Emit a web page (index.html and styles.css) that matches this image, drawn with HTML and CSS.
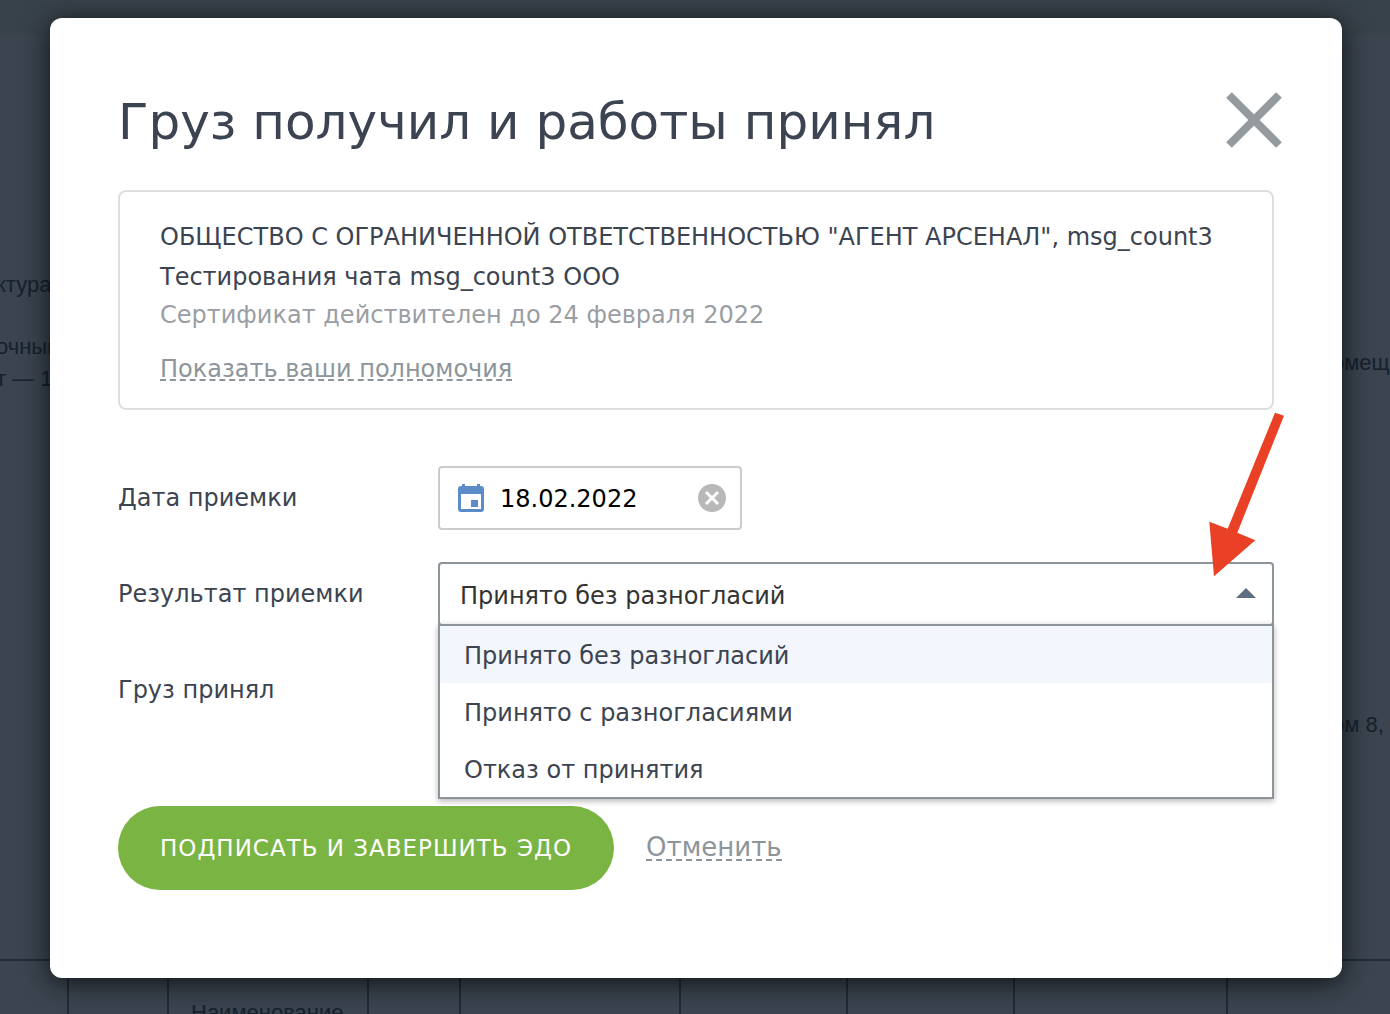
FILE: index.html
```html
<!DOCTYPE html>
<html lang="ru">
<head>
<meta charset="utf-8">
<meta name="viewport" content="width=device-width, initial-scale=1">
<title>Груз получил и работы принял</title>
<link rel="stylesheet" href="styles.css">
</head>
<body>
<div class="document" aria-hidden="true">
  <div class="document-bar"></div>
  <div class="document-text">
    <div class="document-left">
      <p>ктура</p>
      <p>очный<br>т — 1</p>
    </div>
    <div class="document-right">
      <p>омещ</p>
      <p>ом 8,</p>
    </div>
  </div>
  <table class="document-table">
    <colgroup><col class="c-edge"><col class="c-code"><col class="c-name"><col class="c-unit"><col class="c-wide"><col class="c-mid"><col class="c-mid"><col class="c-sum"><col></colgroup>
    <tr><td></td><td></td><td>Наименование</td><td></td><td></td><td></td><td></td><td></td><td></td></tr>
  </table>
</div>

<main class="overlay">
  <section class="modal" role="dialog" aria-modal="true" aria-labelledby="title">
    <header class="modal-header">
      <h1 id="title">Груз получил и работы принял</h1>
      <button class="close" type="button" aria-label="Закрыть">
        <svg viewBox="0 0 56 56" width="56" height="56"><path d="M3 3 53 53M53 3 3 53" stroke="#949a9e" stroke-width="8" fill="none"/></svg>
      </button>
    </header>

    <div class="certificate">
      <p class="owner">ОБЩЕСТВО С ОГРАНИЧЕННОЙ ОТВЕТСТВЕННОСТЬЮ "АГЕНТ АРСЕНАЛ", msg_count3 Тестирования чата msg_count3 ООО</p>
      <p class="validity">Сертификат действителен до 24 февраля 2022</p>
      <a class="dashed" href="#powers">Показать ваши полномочия</a>
    </div>

    <form class="form">
      <div class="row">
        <label for="date">Дата приемки</label>
        <div class="date-field">
          <svg class="calendar" viewBox="0 0 26 28" width="26" height="28"><path fill="#5b8cc9" fill-rule="evenodd" d="M4 0h3v2h12V0h3v2h1a3 3 0 0 1 3 3v20a3 3 0 0 1-3 3H3a3 3 0 0 1-3-3V5a3 3 0 0 1 3-3h1zM3 10v15h20V10z"/><path fill="#5b8cc9" d="M13 16h7v7h-7z"/></svg>
          <input id="date" type="text" value="18.02.2022">
          <button class="clear" type="button" aria-label="Очистить">
            <svg viewBox="0 0 28 28" width="28" height="28"><circle cx="14" cy="14" r="14" fill="#b8b8b8"/><path d="m8 8 12 12M20 8 8 20" stroke="#fff" stroke-width="3" fill="none"/></svg>
          </button>
        </div>
      </div>
      <div class="row">
        <label for="result">Результат приемки</label>
        <div class="select-field">
          <select id="result">
            <option selected>Принято без разногласий</option>
            <option>Принято с разногласиями</option>
            <option>Отказ от принятия</option>
          </select>
          <svg class="caret" viewBox="0 0 20 10" width="20" height="10"><path fill="#5e6e80" d="M0 10 10 0l10 10z"/></svg>
          <ul class="options" role="listbox" aria-label="Результат приемки">
            <li class="option active" role="option" aria-selected="true">Принято без разногласий</li>
            <li class="option" role="option" aria-selected="false">Принято с разногласиями</li>
            <li class="option" role="option" aria-selected="false">Отказ от принятия</li>
          </ul>
          <svg class="arrow" viewBox="0 0 76 166" width="76" height="166"><path fill="#ea4025" d="M67 .7 76 3.7 29.3 120.7l18 7.6L6 164.3 1.3 109.7l18.4 7z"/></svg>
        </div>
      </div>
      <div class="row">
        <span class="label">Груз принял</span>
      </div>
      <div class="actions">
        <button class="submit" type="button">ПОДПИСАТЬ И ЗАВЕРШИТЬ ЭДО</button>
        <a class="dashed cancel" href="#cancel">Отменить</a>
      </div>
    </form>
  </section>
</main>
</body>
</html>
```
FILE: styles.css
```css
* { box-sizing: border-box; }

body {
  margin: 0;
  min-height: 100vh;
  overflow: hidden;
  background: #3b444f;
  color: #3b4450;
  font: 24px/40px "DejaVu Sans", Verdana, sans-serif;
}

h1, p, ul { margin: 0; padding: 0; }

button {
  border: 0;
  padding: 0;
  background: none;
  font: inherit;
  cursor: pointer;
}

svg { display: block; }

/* Document behind the dialog */
.document {
  position: absolute;
  inset: 0;
  overflow: hidden;
  color: #15212e;
  font: 22px/32px "Liberation Sans", Arial, sans-serif;
}

.document-bar { height: 35px; background: #38424b; }

.document-text {
  display: flex;
  justify-content: space-between;
  height: 924px;
}

.document-left { padding-top: 234px; margin-left: -4px; }
.document-left p { margin-bottom: 30px; }
.document-right { padding-top: 312px; width: 58px; }
.document-right p { margin-bottom: 330px; }

.document-table {
  width: 100%;
  table-layout: fixed;
  border-collapse: collapse;
}

.document-table td {
  height: 100px;
  padding: 36px 0 0 22px;
  border: 2px solid #212b36;
  vertical-align: top;
}

.document-table td:first-child { border-left: 0; }
.document-table td:last-child { border-right: 0; }
.c-edge { width: 68px; }
.c-code { width: 100px; }
.c-name { width: 200px; }
.c-unit { width: 92px; }
.c-wide { width: 220px; }
.c-mid { width: 167px; }
.c-sum { width: 213px; }

/* Dialog */
.overlay { position: relative; padding: 18px 48px 36px 50px; }

.modal {
  padding: 68px 68px 88px;
  border-radius: 12px;
  background: #fff;
  box-shadow: 0 4px 28px rgba(0, 0, 0, .75);
}

.modal-header {
  display: flex;
  align-items: center;
  justify-content: space-between;
  margin: 0 -8px 36px 0;
}

h1 { padding-top: 4px; font-size: 50px; line-height: 64px; font-weight: 400; }

.certificate {
  padding: 25px 40px 19px;
  border: 2px solid #dcdee0;
  border-radius: 8px;
}

.validity { color: #9a9ea3; line-height: 36px; margin-bottom: 16px; }

.dashed {
  display: inline-block;
  color: #8d959a;
  line-height: 20px;
  text-decoration: none;
  border-bottom: 2px dashed #8d959a;
}

.form { margin-top: 56px; }

.row {
  display: grid;
  grid-template-columns: 320px 1fr;
  min-height: 64px;
  margin-bottom: 32px;
}

.row label, .label { line-height: 64px; }

.date-field {
  display: flex;
  align-items: center;
  width: 304px;
  height: 64px;
  padding: 0 14px 0 18px;
  border: 2px solid #ccc;
  border-radius: 4px;
}

.date-field input {
  flex: 1;
  min-width: 0;
  margin-left: 16px;
  padding: 2px 0 0;
  border: 0;
  outline: 0;
  background: none;
  color: #000;
  font: inherit;
}

.select-field { position: relative; }

select {
  display: block;
  width: 100%;
  height: 64px;
  padding: 4px 60px 0 20px;
  border: 2px solid #8c959a;
  border-radius: 4px;
  appearance: none;
  background: #fff;
  color: #333;
  font: inherit;
}

.caret { position: absolute; top: 26px; right: 18px; }

.options {
  position: absolute;
  z-index: 1;
  top: 62px;
  left: 0;
  right: 0;
  border: 2px solid #8c959a;
  background: #fff;
  box-shadow: 0 2px 6px rgba(0, 0, 0, .3);
  list-style: none;
}

.option { padding: 3px 24px 0; line-height: 54px; }
.active { background: #f3f6fc; }

/* Pointer laid over the drop-down */
.arrow { position: absolute; z-index: 2; right: -10px; bottom: 48px; }

.actions { display: flex; align-items: center; gap: 32px; margin-top: 84px; }

.submit {
  height: 84px;
  padding: 0 42px;
  border-radius: 42px;
  background: #7ab544;
  color: #fff;
  font-size: 23px;
  letter-spacing: 1px;
}

.cancel { font-size: 26px; line-height: 24px; }
```
